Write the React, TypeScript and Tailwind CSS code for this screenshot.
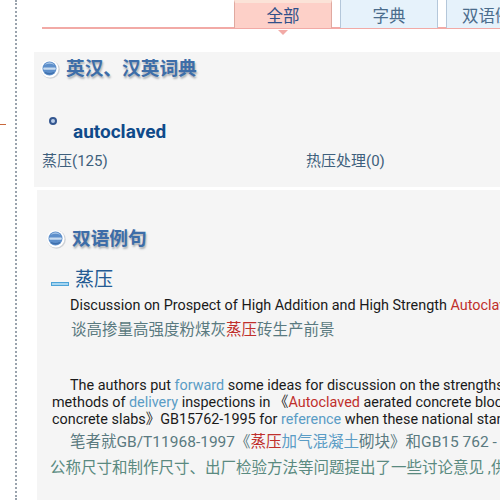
const cjk = "font-['Roboto','Noto_Sans_CJK_SC',sans-serif]";

function Globe({ size }: { size: number }) {
  return (
    <svg width={size} height={size} viewBox="0 0 20 20" className="shrink-0">
      <circle cx="10.5" cy="10.5" r="9.3" fill="#cfd3d8" />
      <circle cx="9.7" cy="9.7" r="8.8" fill="#ffffff" />
      <circle cx="9.5" cy="9.5" r="7" fill="#5d8fcb" />
      <path d="M4.5 6 Q9.5 3.5 14.5 6 Q12.5 3.2 9.5 3.2 Q6.5 3.2 4.5 6 Z" fill="#a9c6e6" />
      <rect x="3.2" y="8.5" width="12.6" height="2.2" rx="1" fill="#c9dcf0" />
      <path d="M5 13.5 Q9.5 16 14 13.5" stroke="#3f6faa" strokeWidth="1.4" fill="none" />
    </svg>
  );
}

function SectionTitle({ children }: { children: string }) {
  return (
    <div className="flex items-center gap-[6px]">
      <Globe size={20} />
      <h2 className="text-[18.7px] leading-6 font-bold text-[#3d6da8] [text-shadow:1px_2px_2px_#a8adb3]">
        {children}
      </h2>
    </div>
  );
}

function Tab({ label, active }: { label: string; active?: boolean }) {
  return (
    <div
      className={
        active
          ? "relative h-7 w-[98px] shrink-0 border-x border-t-3 border-x-[#e0a9a0] border-t-[#fbe3d8] bg-[#fdd0c8] pt-[2px] text-center text-[16.5px] leading-6 text-[#31508a]"
          : "relative h-7 w-[98px] shrink-0 border-x border-x-[#b4c7da] bg-[#e6f2fb] pt-[5px] text-center text-[16.5px] leading-6 text-[#4a6c8c]"
      }
    >
      {label}
      {active && (
        <span className="absolute top-[27px] left-[43px] h-0 w-0 border-x-[5px] border-t-[5px] border-x-transparent border-t-[#f2aaa6]" />
      )}
    </div>
  );
}

export default function App() {
  return (
    <div className={`flex h-[500px] w-[500px] overflow-hidden bg-white ${cjk}`}>
      <div className="relative h-full w-[17px] shrink-0 border-r-2 border-dotted border-r-[#9aa3ad]">
        <span className="absolute top-[124px] left-0 h-px w-[6px] bg-[#c8683c]" />
      </div>
      <div className="flex min-w-0 flex-1 flex-col">
        <div className="ml-[25px] flex h-[29px] gap-2 border-b-2 border-b-[#f2aaa6] pl-[192px]">
          <Tab label="全部" active />
          <Tab label="字典" />
          <Tab label="双语例句" />
        </div>

        <section className="mt-[23px] ml-[17px] h-[135px] bg-[#f5f5f5] pt-[5px] pl-[6px]">
          <SectionTitle>英汉、汉英词典</SectionTitle>
          <div className="mt-[34px] flex pl-[9px]">
            <span className="mt-[2px] h-[8px] w-[8px] rounded-full border-2 border-[#33568f] bg-[#b9cde8]" />
            <span className="mt-[5px] ml-[16px] text-[19px] leading-6 font-bold text-[#0f4a8a]">autoclaved</span>
          </div>
          <div className="mt-[5px] flex text-[15px] leading-6 text-[#3e5f7c]">
            <span className="ml-[2px] w-[264px]">蒸压(125)</span>
            <span>热压处理(0)</span>
          </div>
        </section>

        <section className="mt-[3px] ml-[20px] flex-1 bg-[#f5f5f5] pt-[37px] pl-[9px] whitespace-nowrap">
          <SectionTitle>双语例句</SectionTitle>
          <div className="mt-[15px] flex items-center pl-[5px]">
            <span className="mt-[8px] h-[4px] w-[18px] shrink-0 border border-[#4da3d8] bg-[#a5d5f0]" />
            <span className="ml-[6px] text-[19px] leading-7 text-[#245a92]">蒸压</span>
          </div>
          <p className="mt-[2px] pl-[24px] text-[14.4px] leading-5 text-[#1a1a1a]">
            Discussion on Prospect of High Addition and High Strength <span className="text-[#c0302c]">Autoclaved</span>
          </p>
          <p className="mt-[2px] pl-[25px] text-[15.5px] leading-6 text-[#5a7a80]">
            谈高掺量高强度粉煤灰<span className="text-[#c0302c]">蒸压</span>砖生产前景
          </p>
          <div className="mt-[35px] text-[14.4px] leading-[17px] text-[#1a1a1a]">
            <p className="pl-[24px]">
              The authors put <span className="text-[#5a9cc5]">forward</span> some ideas for discussion on the strengths
            </p>
            <p className="pl-[6px]">
              methods of <span className="text-[#5a9cc5]">delivery</span> inspections in 《<span className="text-[#c0302c]">Autoclaved</span> aerated concrete block
            </p>
            <p className="pl-[6px]">
              concrete slabs》GB15762-1995 for <span className="text-[#5a9cc5]">reference</span> when these national standards
            </p>
          </div>
          <p className="mt-[2px] pl-[24px] text-[15.5px] leading-6 text-[#5a7a80]">
            笔者就GB/T11968-1997《<span className="text-[#c0302c]">蒸压</span><span className="text-[#5a9cc5]">加气混凝土</span>砌块》和GB15 762 -
          </p>
          <p className="mt-[2px] pl-[4px] text-[15.5px] leading-6 text-[#5a8a80]">
            公称尺寸和制作尺寸、出厂检验方法等问题提出了一些讨论意见 ,供
          </p>
        </section>
      </div>
    </div>
  );
}
